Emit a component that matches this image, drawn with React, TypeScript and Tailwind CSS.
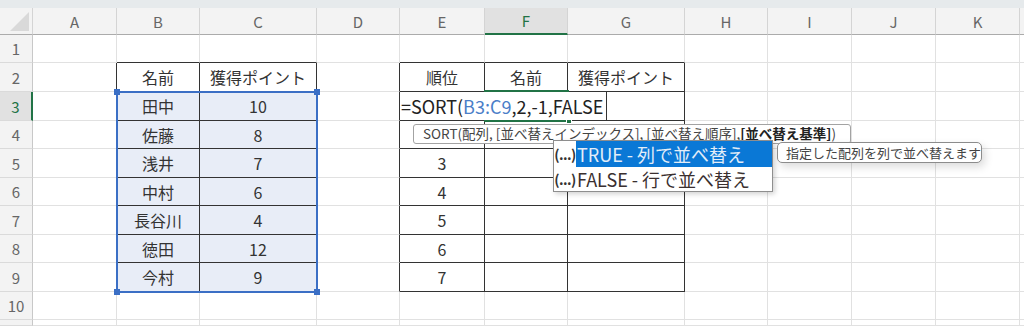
import React from "react";

type Col = { key: string; w: string };
type Row = { n: number; h: string };

const COLS: Col[] = [
  { key: "A", w: "w-[84px]" },
  { key: "B", w: "w-[83px]" },
  { key: "C", w: "w-[117px]" },
  { key: "D", w: "w-[83px]" },
  { key: "E", w: "w-[85px]" },
  { key: "F", w: "w-[83px]" },
  { key: "G", w: "w-[117px]" },
  { key: "H", w: "w-[83px]" },
  { key: "I", w: "w-[84px]" },
  { key: "J", w: "w-[84px]" },
  { key: "K", w: "w-[84px]" },
];

const ROWS: Row[] = [
  { n: 1, h: "h-[28px]" },
  { n: 2, h: "h-[29px]" },
  { n: 3, h: "h-[29px]" },
  { n: 4, h: "h-[28px]" },
  { n: 5, h: "h-[29px]" },
  { n: 6, h: "h-[28px]" },
  { n: 7, h: "h-[29px]" },
  { n: 8, h: "h-[28px]" },
  { n: 9, h: "h-[29px]" },
  { n: 10, h: "h-[28px]" },
  { n: 11, h: "h-[6px]" },
];

const DATA: Record<string, string> = {
  B2: "名前",
  C2: "獲得ポイント",
  B3: "田中",
  C3: "10",
  B4: "佐藤",
  C4: "8",
  B5: "浅井",
  C5: "7",
  B6: "中村",
  C6: "6",
  B7: "長谷川",
  C7: "4",
  B8: "徳田",
  C8: "12",
  B9: "今村",
  C9: "9",
  E2: "順位",
  F2: "名前",
  G2: "獲得ポイント",
  E5: "3",
  E6: "4",
  E7: "5",
  E8: "6",
  E9: "7",
};

// B..C and E..G, rows 2..9 have thin black borders
const inTable = (r: number, c: number) =>
  r >= 2 && r <= 9 && ((c >= 1 && c <= 2) || (c >= 4 && c <= 6));

const Cell = ({ r, c, col }: { r: number; c: number; col: Col }) => {
  const right = inTable(r, c) || inTable(r, c + 1);
  const bottom = inTable(r, c) || inTable(r + 1, c);
  const picked = r >= 3 && r <= 9 && c >= 1 && c <= 2;
  return (
    <div
      className={`${col.w} shrink-0 flex items-center justify-center border-r border-b text-[16px] leading-none ${
        right ? "border-r-[#333]" : "border-r-[#e1e1e1]"
      } ${bottom ? "border-b-[#333]" : "border-b-[#e1e1e1]"} ${
        picked ? "bg-[#e8edf7]" : "bg-white"
      }`}
    >
      {DATA[`${col.key}${r}`] ?? ""}
    </div>
  );
};

const HeaderRow = () => (
  <div className="flex h-[27px]">
    <div className="w-[33px] shrink-0 bg-[#f3f3f3] border-r border-b border-r-[#d4d4d4] border-b-[#ababab]">
      <svg width="32" height="26" viewBox="0 0 32 26">
        <polygon points="29,4 29,23 10,23" fill="#d9d9d9" />
      </svg>
    </div>
    {COLS.map((col) =>
      col.key === "F" ? (
        <div
          key={col.key}
          className={`${col.w} shrink-0 flex items-center justify-center bg-[#e1e1e1] text-[#217346] text-[15px] leading-none border-r border-r-[#d4d4d4] border-b-2 border-b-[#217346]`}
        >
          {col.key}
        </div>
      ) : (
        <div
          key={col.key}
          className={`${col.w} shrink-0 flex items-center justify-center bg-[#f3f3f3] text-[#666] text-[15px] leading-none border-r border-r-[#d4d4d4] border-b border-b-[#ababab]`}
        >
          {col.key}
        </div>
      )
    )}
    <div className="flex-1 bg-[#f3f3f3] border-b border-b-[#ababab]" />
  </div>
);

const SheetRow = ({ row }: { row: Row }) => (
  <div className={`flex ${row.h}`}>
    {row.n === 3 ? (
      <div className="w-[33px] shrink-0 flex items-center justify-center bg-[#e1e1e1] text-[#217346] text-[15px] leading-none border-b border-b-[#dadada] border-r-2 border-r-[#217346]">
        {row.n}
      </div>
    ) : (
      <div className="w-[33px] shrink-0 flex items-center justify-center bg-[#f3f3f3] text-[#666] text-[15px] leading-none border-b border-b-[#dadada] border-r border-r-[#c8c8c8]">
        {row.n <= 10 ? row.n : ""}
      </div>
    )}
    {COLS.map((col, i) => (
      <Cell key={col.key} r={row.n} c={i} col={col} />
    ))}
    <div className="flex-1 border-b border-b-[#e1e1e1]" />
  </div>
);

const Overlays = () => (
  <>
    {/* selection B3:C9 */}
    <div className="absolute left-[116px] top-[91px] w-[202px] h-[202px] border-2 border-[#3b6fc5]" />
    <div className="absolute left-[114px] top-[89px] w-[6px] h-[6px] bg-[#3b6fc5]" />
    <div className="absolute left-[314px] top-[89px] w-[6px] h-[6px] bg-[#3b6fc5]" />
    <div className="absolute left-[114px] top-[289px] w-[6px] h-[6px] bg-[#3b6fc5]" />
    <div className="absolute left-[314px] top-[289px] w-[6px] h-[6px] bg-[#3b6fc5]" />

    {/* active cell F3 */}
    <div className="absolute left-[484px] top-[90px] w-[85px] h-[2px] bg-[#217346]" />
    <div className="absolute left-[484px] top-[120px] w-[85px] h-[2px] bg-[#217346]" />
    <div className="absolute left-[566px] top-[118px] w-[6px] h-[6px] bg-[#217346] border border-white" />

    {/* in-cell editor */}
    <div className="absolute left-[400px] top-[92px] w-[207px] h-[28px] bg-white border-r border-r-[#333] flex items-center pl-[1px] text-[18px] leading-none text-[#222]">
      <span>=SORT(</span>
      <span className="text-[#4a7ec8]">B3:C9</span>
      <span>,2,-1,FALSE</span>
    </div>

    {/* function tooltip */}
    <div className="absolute left-[413px] top-[124px] w-[438px] h-[20px] bg-white border border-[#a3a3a3] rounded-[3px] flex items-center pl-[9px] text-[13.5px] leading-none text-[#444] whitespace-nowrap">
      <span>SORT(配列, [並べ替えインデックス], [並べ替え順序], </span>
      <span className="font-bold text-[#222]">[並べ替え基準]</span>
      <span>)</span>
    </div>

    {/* argument dropdown */}
    <div className="absolute left-[553px] top-[140px] w-[220px] h-[52px] bg-white border border-[#8e8e8e] shadow-[2px_2px_5px_rgba(0,0,0,0.18)] flex flex-col">
      <div className="flex h-[26px]">
        <div className="w-[22px] shrink-0 flex items-center justify-center text-[14px] font-bold leading-none text-[#333] tracking-[-0.5px]">
          (...)
        </div>
        <div className="flex-1 flex items-center pl-[1px] bg-[#0a78d6] text-[#e3edf8] text-[18px] leading-none">
          TRUE - 列で並べ替え
        </div>
      </div>
      <div className="flex h-[24px]">
        <div className="w-[22px] shrink-0 flex items-center justify-center text-[14px] font-bold leading-none text-[#333] tracking-[-0.5px]">
          (...)
        </div>
        <div className="flex-1 flex items-center pl-[1px] text-[#3a2f2f] text-[18px] leading-none">
          FALSE - 行で並べ替え
        </div>
      </div>
    </div>

    {/* description tip */}
    <div className="absolute left-[777px] top-[142px] w-[205px] h-[21px] bg-white border border-[#8c8c8c] rounded-[5px] shadow-[3px_4px_8px_rgba(0,0,0,0.14)] flex items-center pl-[8px] text-[13px] leading-none text-[#444] whitespace-nowrap">
      指定した配列を列で並べ替えます
    </div>
  </>
);

export default function App() {
  return (
    <div className="relative w-[1024px] h-[326px] overflow-hidden bg-white text-[#333] font-['Noto_Sans_CJK_JP',sans-serif]">
      <div className="h-[8px] bg-[#e6eaec]" />
      <HeaderRow />
      {ROWS.map((row) => (
        <SheetRow key={row.n} row={row} />
      ))}
      <Overlays />
    </div>
  );
}
